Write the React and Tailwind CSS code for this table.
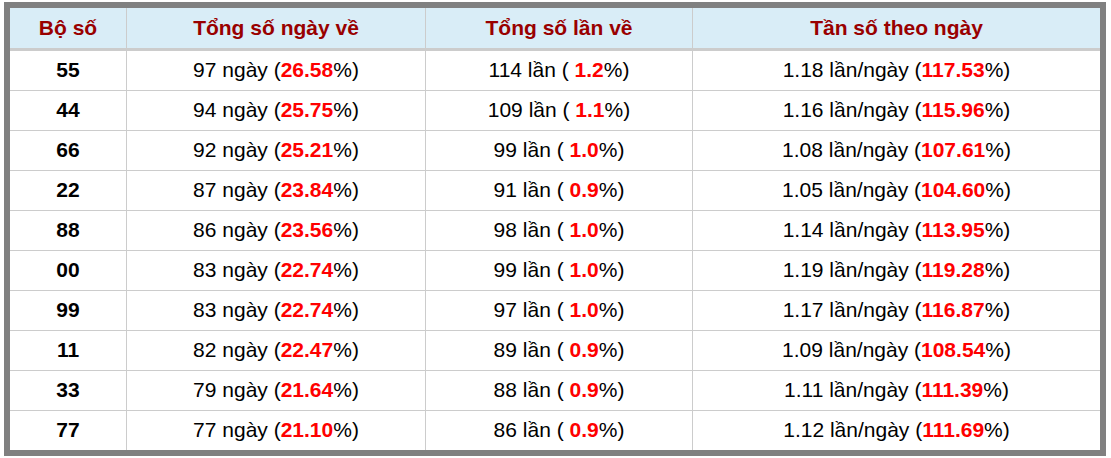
import React from 'react';

const rows = [
    ['55', '97', '26.58', '114', '1.2', '1.18', '117.53'],
    ['44', '94', '25.75', '109', '1.1', '1.16', '115.96'],
    ['66', '92', '25.21', '99', '1.0', '1.08', '107.61'],
    ['22', '87', '23.84', '91', '0.9', '1.05', '104.60'],
    ['88', '86', '23.56', '98', '1.0', '1.14', '113.95'],
    ['00', '83', '22.74', '99', '1.0', '1.19', '119.28'],
    ['99', '83', '22.74', '97', '1.0', '1.17', '116.87'],
    ['11', '82', '22.47', '89', '0.9', '1.09', '108.54'],
    ['33', '79', '21.64', '88', '0.9', '1.11', '111.39'],
    ['77', '77', '21.10', '86', '0.9', '1.12', '111.69'],
];

const cols = 'grid grid-cols-[117px_299px_267px_407px]';
const cell = 'flex items-center justify-center border-r border-[#cccccc]';
const rowCell = `${cell} pb-[2px]`;

const Red = ({ children }) => <b className="text-[#ff0000] font-bold">{children}</b>;

const App = () => {
    return (
        <div className="bg-white w-[1111px] h-[458px] pt-[2px] pl-[4px] font-['Liberation_Sans',Arial,sans-serif] text-[21px] text-black">
            <div className="w-[1102px] border-[6px] border-[#808080]">
                <div className={`${cols} h-[43px] bg-[#d9edf7] border-b-[3px] border-[#cccccc] font-bold text-[#990000]`}>
                    <div className={cell}>Bộ số</div>
                    <div className={cell}>Tổng số ngày về</div>
                    <div className={cell}>Tổng số lần về</div>
                    <div className="flex items-center justify-center">Tần số theo ngày</div>
                </div>
                {rows.map((r, i) => (
                    <div
                        key={i}
                        className={`${cols} ${i < rows.length - 1 ? 'h-[40px] border-b border-[#cccccc]' : 'h-[39px]'}`}
                    >
                        <div className={`${rowCell} font-bold`}>{r[0]}</div>
                        <div className={rowCell}>
                            <span>{r[1]} ngày (<Red>{r[2]}</Red>%)</span>
                        </div>
                        <div className={rowCell}>
                            <span>{r[3]} lần ( <Red>{r[4]}</Red>%)</span>
                        </div>
                        <div className="flex items-center justify-center pb-[2px]">
                            <span>{r[5]} lần/ngày (<Red>{r[6]}</Red>%)</span>
                        </div>
                    </div>
                ))}
            </div>
        </div>
    );
};

export default App;
